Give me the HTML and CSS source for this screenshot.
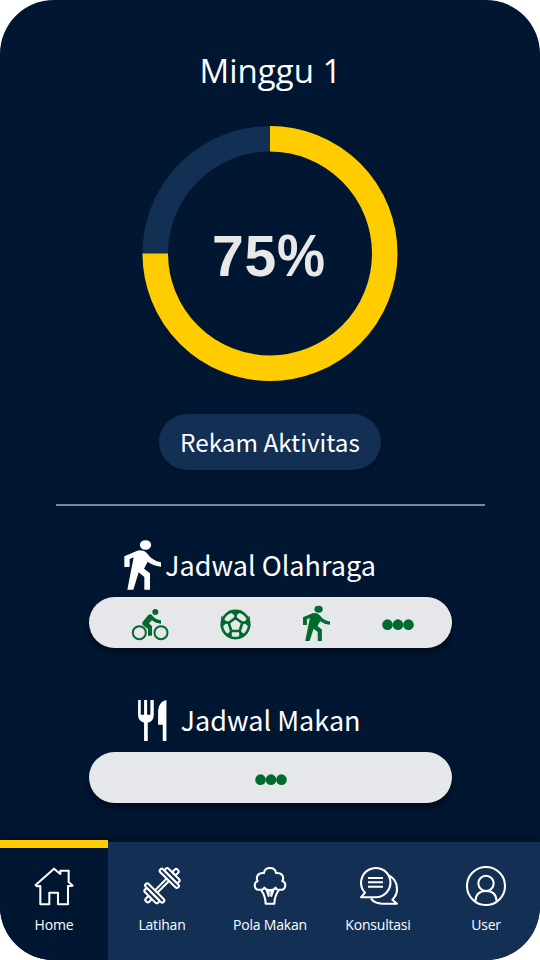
FILE: index.html
```html
<!DOCTYPE html>
<html lang="id">
<head>
<meta charset="utf-8">
<title>Minggu 1</title>
<link rel="stylesheet" href="styles.css">
</head>
<body>
<svg width="0" height="0" class="defs">
  <symbol id="walk" viewBox="129 27 120 156" preserveAspectRatio="none">
    <ellipse cx="196.500" cy="45" rx="17" ry="14.500"/>
    <path d="M133 79L172 62Q190 58 202 71Q216 91 243 97V110Q218 107 203 95L192 116L210 130V179H193V141L176 127L160 179H142L161 82L149 87V111H133Z"/>
  </symbol>
  <symbol id="dots" viewBox="0 0 96 34"><circle cx="16.500" cy="17" r="16"/><circle cx="48" cy="17" r="16"/><circle cx="79.500" cy="17" r="16"/></symbol>
</svg>
<div class="phone">
  <main class="content">
    <h1 class="title">Minggu 1</h1>
    <div class="progress">
      <svg class="ring" viewBox="0 0 256 256">
        <circle class="ring-track" cx="128" cy="127.500" r="114.750"/>
        <path class="ring-value" d="M128 12.750A114.750 114.750 0 1 1 13.250 127.500"/>
      </svg>
      <span class="percent">75<span class="sign">%</span></span>
    </div>
    <button class="record">Rekam Aktivitas</button>
    <hr class="divider">
    <section class="schedule sport">
      <h2 class="heading"><svg class="head-walk"><use href="#walk"/></svg><span>Jadwal Olahraga</span></h2>
      <div class="pill">
        <svg class="bike" viewBox="153 235 114 99">
          <g class="wheels"><circle cx="178" cy="309" r="19.500"/><circle cx="243" cy="309" r="19.500"/></g>
          <circle cx="226" cy="247" r="9"/>
          <path d="M188 276L205 256Q213 250 220 261Q227 269 243 272V282Q225 281 216 272L207 281L216 290V318H204V298L191 288Q184 282 188 276Z"/>
        </svg>
        <svg class="ball" viewBox="420 235 93 93">
          <circle cx="466.500" cy="281.500" r="41"/>
          <path class="patch" d="M448 241H485L466.500 255ZM425 257L423 290L440 276ZM508 257L510 290L493 276ZM436 311L457 324L453 306ZM497 311L476 324L480 306Z"/>
          <path d="M466.500 262L487 277L479 301H454L446 277ZM466.500 262V247M487 277L501 273M479 301L486 314M454 301L447 314M446 277L432 273"/>
        </svg>
        <svg class="pill-walk"><use href="#walk"/></svg>
        <svg class="dots"><use href="#dots"/></svg>
      </div>
    </section>
    <section class="schedule meal">
      <h2 class="heading">
        <svg class="cutlery" viewBox="174 45 85 123"><path d="M174 45H182V89H192V45H201V89H211V45H221V90Q221 109 203 113V168H192V113Q174 108 174 90ZM259 45V168H248V119H234V76Q236 50 259 45Z"/></svg>
        <span>Jadwal Makan</span>
      </h2>
      <div class="pill single"><svg class="dots"><use href="#dots"/></svg></div>
    </section>
  </main>
  <nav class="tabs">
    <a class="tab active">
      <svg viewBox="102 108 120 120"><path d="M162 116L107 165L111 169L121 168V223H148V188H174V223H204V168L218 167L206 156V122H181V132Z"/></svg>
      <span>Home</span>
    </a>
    <a class="tab">
      <svg viewBox="-60 -59 120 120">
        <g transform="rotate(-45)">
          <path d="M-25 -5H25M-25 5H25"/>
          <rect x="25" y="-38" width="12" height="76" rx="6"/><rect x="37" y="-28" width="13" height="56" rx="6"/><rect x="50" y="-7" width="17" height="14" rx="6"/>
          <rect x="-37" y="-38" width="12" height="76" rx="6"/><rect x="-50" y="-28" width="13" height="56" rx="6"/><rect x="-67" y="-7" width="17" height="14" rx="6"/>
        </g>
      </svg>
      <span>Latihan</span>
    </a>
    <a class="tab">
      <svg viewBox="180 108 120 120"><path d="M213 179Q195 182 194 166Q194 156 203 153Q198 145 203 136Q208 128 222 129Q224 114 240 114Q256 114 258 129Q272 128 277 136Q282 145 277 153Q286 156 286 166Q285 182 267 179Q259 180 257 173Q252 181 240 180Q228 181 223 173Q220 180 213 179ZM214 181Q226 197 227 221H253Q254 197 266 181M230 181L236 198V182M250 181L244 198V182"/></svg>
      <span>Pola Makan</span>
    </a>
    <a class="tab">
      <svg viewBox="24 108 120 120"><path d="M33 202L45 188A44 44 0 1 1 76 202ZM54 144H99M54 157H99M54 170H99M118 137Q141 150 141 178Q141 196 127 209L141 221H97Q74 221 63 206"/></svg>
      <span>Konsultasi</span>
    </a>
    <a class="tab">
      <svg viewBox="348 109 120 120"><circle cx="408" cy="169" r="57"/><circle cx="408" cy="161" r="23"/><path d="M376 214Q378 184 408 184Q438 184 440 214"/></svg>
      <span>User</span>
    </a>
  </nav>
</div>
</body>
</html>
```
FILE: styles.css
```css
* { box-sizing: border-box; }
body { margin: 0; background: #fff; }
.defs { position: absolute; }
.phone {
  width: 540px; height: 960px; border-radius: 54px; overflow: hidden;
  display: flex; flex-direction: column; background: #001631; color: #fff;
}
.content { height: 840px; display: flex; flex-direction: column; align-items: center; }
.title {
  margin: 47px 0 0; height: 48px; padding-left: 1px;
  font: 400 33px/48px "Open Sans", sans-serif; white-space: nowrap;
}
.progress { display: grid; width: 256px; height: 256px; margin-top: 31px; place-items: center; }
.ring, .percent { grid-area: 1 / 1; }
.ring { width: 256px; height: 256px; fill: none; stroke-width: 25.500; }
.ring-track { stroke: #142f54; }
.ring-value { stroke: #fc0; }
.percent {
  display: flex; align-items: baseline; padding: 4px 3px 0 0; color: #e8e8e8;
  font: 700 57px/64px "Liberation Sans", sans-serif; letter-spacing: .800px;
}
.sign { width: 48px; font-size: 60px; letter-spacing: 0; transform: scaleX(.900); transform-origin: left; }
.record {
  width: 222px; height: 56px; margin: 32px 0 0; padding: 0; border: 0; border-radius: 28px;
  background: #142f54; color: #fff; box-shadow: 0 3px 6px rgba(0, 0, 0, .22);
  font: 400 24.300px/56px "Noto Sans CJK JP", sans-serif; white-space: nowrap;
}
.divider { width: 429px; height: 1.500px; margin: 34px 0 0; border: 0; background: #7d8796; }
.schedule { width: 363px; }
.sport { margin-top: 33.500px; }
.meal { margin-top: 50px; }
.heading {
  display: flex; height: 58px; margin: 0;
  font: 400 27px/52px "Noto Sans CJK JP", sans-serif; white-space: nowrap;
}
.heading svg { fill: #fff; flex: none; }
.head-walk { width: 40px; height: 52px; margin: 0 2px 0 34.500px; }
.cutlery { width: 28.500px; height: 41px; margin: 2px 14px 0 49.500px; }
.meal .heading { height: 53.500px; }
.meal .heading span { line-height: 44px; }
.pill {
  display: flex; height: 51px; border-radius: 26px; background: #e6e7eb;
  box-shadow: 0 4px 6px rgba(0, 0, 0, .5); fill: #006b2d;
}
.pill svg { flex: none; }
.bike { width: 38px; height: 33px; margin: 11px 0 0 42.500px; }
.wheels { fill: none; stroke: #006b2d; stroke-width: 6; }
.ball { width: 31px; height: 31px; margin: 11.500px 0 0 51px; fill: none; stroke: #006b2d; stroke-width: 8; }
.ball .patch { fill: #006b2d; stroke-width: 2; }
.pill-walk { width: 29.500px; height: 37px; margin: 7.500px 0 0 51px; }
.dots { width: 32px; height: 11.300px; margin: 22px 0 0 50.500px; }
.single { justify-content: center; }
.single .dots { margin-left: 1px; }
.tabs {
  display: grid; grid-template-columns: repeat(5, 108px); height: 120px;
  background: linear-gradient(#001226 0 1.500px, #142f54 1.500px);
  box-shadow: 0 -3px 6px rgba(0, 0, 0, .25);
}
.tab { display: flex; flex-direction: column; align-items: center; padding-top: 26px; }
.tab.active { padding-top: 18px; border-top: 8px solid #fc0; background: #001631; }
.tab svg { width: 40px; height: 40px; fill: none; stroke: #fff; stroke-width: 6.200; stroke-linejoin: round; }
.tab span { margin-top: 9px; font: 400 14px/20px "Open Sans", sans-serif; letter-spacing: -.200px; }
```
